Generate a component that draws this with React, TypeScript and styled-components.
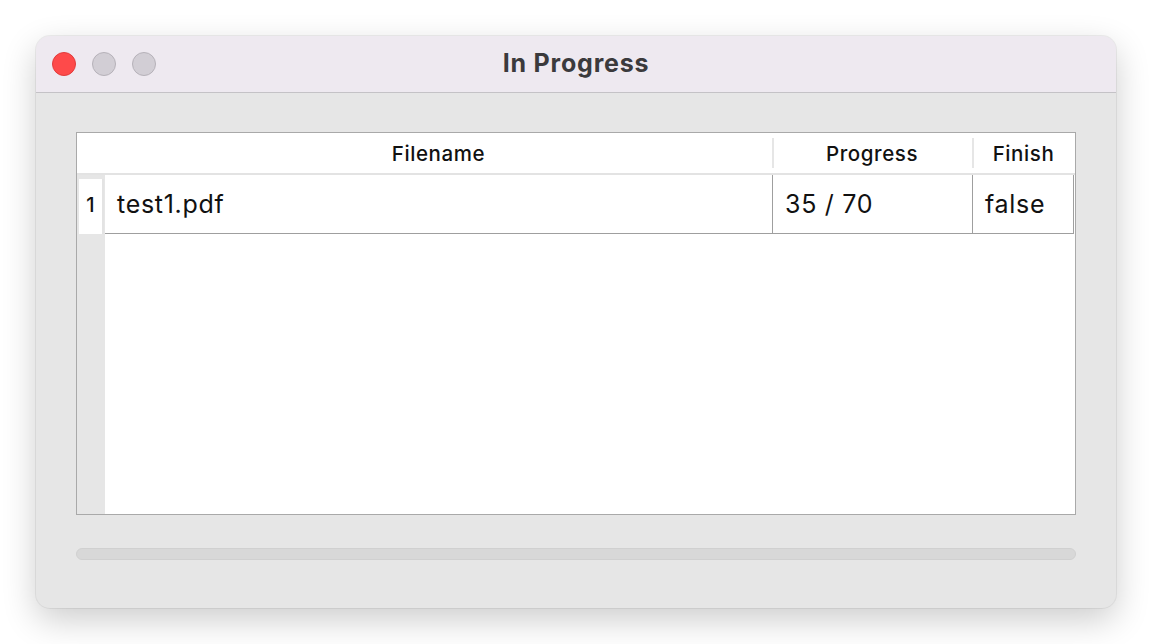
import React from "react";
import styled, { createGlobalStyle } from "styled-components";

const GlobalStyle = createGlobalStyle`
  html, body {
    margin: 0;
    padding: 0;
    background: #ffffff;
  }
  body {
    font-family: Inter, "Liberation Sans", Arial, sans-serif;
  }
`;

const Page = styled.div`
  width: 1152px;
  height: 644px;
  padding: 36px;
  box-sizing: border-box;
`;

const Window = styled.div`
  width: 1080px;
  height: 572px;
  border-radius: 14px;
  overflow: hidden;
  background: #e6e6e6;
  box-shadow: 0 12px 34px rgba(0, 0, 0, 0.2), 0 0 0 1px rgba(0, 0, 0, 0.06);
  display: flex;
  flex-direction: column;
`;

const TitleBar = styled.div`
  position: relative;
  height: 56px;
  flex-shrink: 0;
  background: #eee9f0;
  border-bottom: 1px solid #c4c2c6;
  display: flex;
  align-items: center;
  justify-content: center;
`;

const Lights = styled.div`
  position: absolute;
  left: 16px;
  top: 16px;
  display: flex;
  gap: 16px;
`;

const Light = styled.span<{ $color: string; $ring: string }>`
  width: 22px;
  height: 22px;
  border-radius: 50%;
  background: ${(p) => p.$color};
  border: 1px solid ${(p) => p.$ring};
`;

const Title = styled.div`
  font-size: 25px;
  font-weight: 700;
  color: #3b3a3c;
  letter-spacing: 0.8px;
  margin-top: -2px;
`;

const Content = styled.div`
  flex: 1;
  padding: 39px 40px 0 40px;
  display: flex;
  flex-direction: column;
`;

const Table = styled.div`
  height: 383px;
  border: 1px solid #a9a9a9;
  background: #ffffff;
  display: grid;
  grid-template-columns: 28px 667px 200px 1fr;
  grid-template-rows: 42px 59px 1fr;
  box-sizing: border-box;
`;

const HeadCell = styled.div<{ $sep?: boolean }>`
  display: flex;
  align-items: center;
  justify-content: center;
  font-size: 20.5px;
  font-weight: 500;
  letter-spacing: 0.6px;
  color: #111;
  border-bottom: 2px solid #e3e3e3;
  box-sizing: border-box;
  position: relative;
  ${(p) =>
    p.$sep &&
    `&::before {
      content: "";
      position: absolute;
      left: 0;
      top: 5px;
      bottom: 5px;
      width: 2px;
      background: #e6e6e6;
    }`}
`;

const RowNum = styled.div`
  background: #e6e6e6;
  padding: 4px 1px 0 2px;
  display: flex;
`;

const RowNumInner = styled.div`
  flex: 1;
  background: #ffffff;
  border-right: 2px solid #e3e3e3;
  display: flex;
  align-items: center;
  justify-content: center;
  font-size: 20px;
  font-weight: 500;
  color: #111;
  padding-bottom: 4px;
`;

const Cell = styled.div<{ $last?: boolean }>`
  display: flex;
  align-items: center;
  padding-left: 12px;
  padding-bottom: 1px;
  font-size: 25px;
  letter-spacing: 0.7px;
  color: #111;
  border-bottom: 1px solid #9f9f9f;
  border-left: 1px solid #9f9f9f;
  ${(p) => p.$last && `border-right: 1px solid #9f9f9f; margin-right: 1px;`}
  box-sizing: border-box;
`;

const FirstCell = styled(Cell)`
  border-left: none;
`;

const Gutter = styled.div`
  background: #e6e6e6;
`;

const Empty = styled.div`
  grid-column: 2 / 5;
  background: #ffffff;
`;

const ProgressTrack = styled.div`
  margin-top: 33px;
  height: 12px;
  border-radius: 6px;
  background: #d8d8d8;
  border: 1px solid #d0d0d0;
  box-sizing: border-box;
`;

export default function App() {
  return (
    <>
      <GlobalStyle />
      <Page>
        <Window>
          <TitleBar>
            <Lights>
              <Light $color="#fe4a4a" $ring="#e13c3c" />
              <Light $color="#d2ced5" $ring="#b6b2b9" />
              <Light $color="#d2ced5" $ring="#b6b2b9" />
            </Lights>
            <Title>In Progress</Title>
          </TitleBar>
          <Content>
            <Table>
              <HeadCell />
              <HeadCell>Filename</HeadCell>
              <HeadCell $sep>Progress</HeadCell>
              <HeadCell $sep>Finish</HeadCell>
              <RowNum>
                <RowNumInner>1</RowNumInner>
              </RowNum>
              <FirstCell>test1.pdf</FirstCell>
              <Cell>35 / 70</Cell>
              <Cell $last>false</Cell>
              <Gutter />
              <Empty />
            </Table>
            <ProgressTrack />
          </Content>
        </Window>
      </Page>
    </>
  );
}
